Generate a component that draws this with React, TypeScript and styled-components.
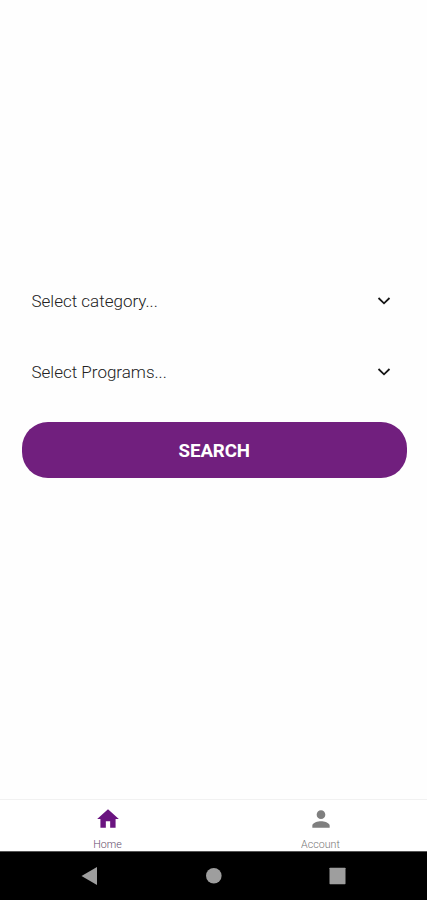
import React from "react";
import styled, { createGlobalStyle } from "styled-components";

const GlobalStyle = createGlobalStyle`
  * { box-sizing: border-box; }
  body { margin: 0; background: #fefefe; font-family: Roboto, "Liberation Sans", sans-serif; }
  button { font-family: inherit; border: 0; padding: 0; background: none; cursor: pointer; }
`;

const Screen = styled.div`
  display: flex;
  flex-direction: column;
  height: 100vh;
  min-height: 600px;
  background: #fefefe;
  overflow: hidden;
`;

const Content = styled.main`
  flex: 1;
  display: flex;
  flex-direction: column;
  padding: 276px 20px 0 21.5px;
`;

const Select = styled.button`
  display: flex;
  align-items: center;
  justify-content: space-between;
  height: 50px;
  margin-bottom: 21px;
  padding: 0 16px 0 10px;
`;

const SelectLabel = styled.span`
  font-size: 17px;
  font-weight: 300;
  color: #222;
  white-space: nowrap;
`;

const SearchButton = styled.button`
  height: 55.5px;
  margin-top: 4px;
  border-radius: 26px;
  background: #711f7e;
  color: #fff;
  font-size: 18.7px;
  font-weight: 700;
  letter-spacing: -0.1px;
  padding-top: 2.5px;
`;

const TabBar = styled.nav`
  display: grid;
  grid-template-columns: 1fr 1fr;
  height: 52px;
  padding-left: 1px;
  border-top: 1px solid #f1f1f1;
  background: #fff;
  overflow: hidden;
`;

const Tab = styled.button<{ $active?: boolean }>`
  display: flex;
  flex-direction: column;
  align-items: center;
  height: 51px;
  padding-top: 6px;
  color: ${(p) => (p.$active ? "#6a1480" : "#7f7f7f")};
`;

const TabIcon = styled.svg`
  width: 26px;
  height: 26px;
  flex: none;
  fill: currentColor;
`;

const TabLabelClip = styled.span`
  flex: none;
  height: 10.5px;
  margin-top: 7px;
  overflow: hidden;
`;

const TabLabel = styled.span<{ $active?: boolean }>`
  display: block;
  font-size: 10.7px;
  line-height: 12px;
  font-weight: 300;
  color: ${(p) => (p.$active ? "#5f4b6a" : "#777")};
`;

const SystemBar = styled.footer`
  display: flex;
  align-items: center;
  justify-content: space-between;
  height: 49px;
  padding: 0 81.5px 0 81px;
  background: #000;
  border-top: 1px solid #555;
`;

const SystemIcon = styled.svg`
  width: 17px;
  height: 20px;
  fill: #9e9e9e;
`;

const Chevron = () => (
  <svg width="14" height="10" viewBox="0 0 14 10" fill="none" stroke="#161616" strokeWidth="1.8">
    <path d="M1.5 2 7 7.3 12.5 2" />
  </svg>
);

const App = () => (
  <>
    <GlobalStyle />
    <Screen>
      <Content>
        <Select>
          <SelectLabel>Select category...</SelectLabel>
          <Chevron />
        </Select>
        <Select>
          <SelectLabel>Select Programs...</SelectLabel>
          <Chevron />
        </Select>
        <SearchButton>SEARCH</SearchButton>
      </Content>
      <TabBar>
        <Tab $active>
          <TabIcon viewBox="0 0 24 24">
            <path d="M10 20v-6h4v6h5v-8h3L12 3 2 12h3v8z" />
          </TabIcon>
          <TabLabelClip>
            <TabLabel $active>Home</TabLabel>
          </TabLabelClip>
        </Tab>
        <Tab>
          <TabIcon viewBox="0 0 24 24">
            <path d="M12 12c2.21 0 4-1.79 4-4s-1.79-4-4-4-4 1.79-4 4 1.79 4 4 4zm0 2c-2.67 0-8 1.34-8 4v2h16v-2c0-2.66-5.33-4-8-4z" />
          </TabIcon>
          <TabLabelClip>
            <TabLabel>Account</TabLabel>
          </TabLabelClip>
        </Tab>
      </TabBar>
      <SystemBar>
        <SystemIcon viewBox="0 0 17 20">
          <path d="M0.5 10 16 1V19z" />
        </SystemIcon>
        <SystemIcon viewBox="0 0 17 20">
          <circle cx="8.8" cy="9.7" r="7.8" />
        </SystemIcon>
        <SystemIcon viewBox="0 0 17 20">
          <rect x="0.5" y="1.7" width="16" height="16.5" rx="0.6" />
        </SystemIcon>
      </SystemBar>
    </Screen>
  </>
);

export default App;
